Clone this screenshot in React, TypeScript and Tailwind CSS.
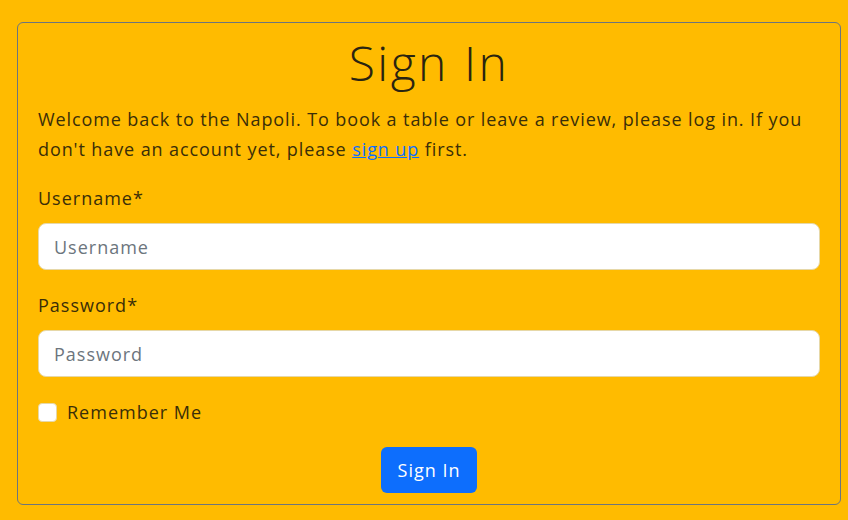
import React from "react";

export default function App() {
  return (
    <div
      className="w-[848px] h-[520px] bg-[#ffbb00] pt-[22px] pl-[17px] pr-[7px] overflow-hidden"
      style={{ fontFamily: '"Open Sans", sans-serif' }}
    >
      <div className="border border-[#6c757d] rounded-[6px] px-[20px] pb-[10px] h-[483px]">
        <h1 className="text-center text-[48px] leading-[56px] tracking-[2.5px] text-[#2a2410] mt-[12px] font-light">
          Sign In
        </h1>
        <p className="text-[18px] leading-[30px] tracking-[0.9px] text-[#3a2e08] mt-[13px]">
          Welcome back to the Napoli. To book a table or leave a review, please log in. If you don't have an account yet, please{" "}
          <a href="#" className="text-[#0d6efd] underline">sign up</a> first.
        </p>
        <form className="mt-[22px]">
          <label className="block text-[18px] leading-[24px] tracking-[1px] text-[#3a2e08]">Username*</label>
          <input
            placeholder="Username"
            className="mt-[13px] block w-full h-[47px] rounded-[8px] bg-white border border-[#e6d8a8] px-[15px] text-[18px] tracking-[1px] placeholder-[#6c757d] outline-none"
          />
          <label className="block mt-[23px] text-[18px] leading-[24px] tracking-[1px] text-[#3a2e08]">Password*</label>
          <input
            placeholder="Password"
            className="mt-[13px] block w-full h-[47px] rounded-[8px] bg-white border border-[#e6d8a8] px-[15px] text-[18px] tracking-[1px] placeholder-[#6c757d] outline-none"
          />
          <div className="flex items-center mt-[23px] gap-[10px]">
            <span className="w-[19px] h-[19px] rounded-[4px] bg-white border border-[#e6d8a8]" />
            <span className="text-[18px] leading-[24px] tracking-[1px] text-[#3a2e08]">Remember Me</span>
          </div>
          <div className="flex justify-center mt-[23px]">
            <button
              type="button"
              className="bg-[#0d6efd] text-white rounded-[6px] w-[96px] h-[46px] text-[18px] tracking-[1px]"
            >
              Sign In
            </button>
          </div>
        </form>
      </div>
    </div>
  );
}
